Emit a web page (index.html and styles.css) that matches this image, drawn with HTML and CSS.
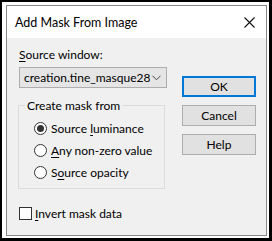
FILE: index.html
```html
<!DOCTYPE html>
<html lang="en">
<head>
  <meta charset="UTF-8">
  <title>Add Mask From Image</title>
  <link rel="stylesheet" href="styles.css">
</head>
<body>

  <div class="frame">
    <div class="window">

      <div class="titlebar">
        <span class="title">Add Mask From Image</span>
        <svg class="close" width="11" height="11" viewBox="0 0 11 11">
          <path d="M0.5 0.5 L10.5 10.5 M10.5 0.5 L0.5 10.5" stroke="#111" stroke-width="1.1" fill="none"/>
        </svg>
      </div>

      <div class="content">
        <div class="left-col">
          <div class="label"><u>S</u>ource window:</div>
          <div class="combo">
            <span class="combo-text">creation.tine_masque28</span>
            <svg class="chevron" width="9" height="6" viewBox="0 0 9 6">
              <path d="M0.5 0.8 L4.5 4.8 L8.5 0.8" stroke="#444" stroke-width="1" fill="none"/>
            </svg>
          </div>

          <fieldset class="group">
            <legend>Create mask from</legend>
            <div class="radio-list">
              <div class="radio-row">
                <span class="radio checked"></span>
                <span>Source <u>l</u>uminance</span>
              </div>
              <div class="radio-row">
                <span class="radio"></span>
                <span><u>A</u>ny non-zero value</span>
              </div>
              <div class="radio-row">
                <span class="radio"></span>
                <span>S<u>o</u>urce opacity</span>
              </div>
            </div>
          </fieldset>

          <div class="check-row">
            <span class="checkbox"></span>
            <span><u>I</u>nvert mask data</span>
          </div>
        </div>

        <div class="right-col">
          <div class="btn default">OK</div>
          <div class="btn">Cancel</div>
          <div class="btn">Help</div>
        </div>
      </div>

    </div>
  </div>

</body>
</html>
```

FILE: styles.css
```css
:root {
  --dialog-bg: #f0f0f0;
  --text-color: #000;
  --button-bg: #e1e1e1;
  --button-border: #adadad;
  --accent-color: #0078d7;
  --group-border: #dcdcdc;
  --font-main: Lato, 'Noto Sans', sans-serif;
}

body {
  margin: 0;
  background: #fff;
  font-family: var(--font-main);
  font-size: 12px;
  color: var(--text-color);
}

u {
  text-decoration-thickness: 1px;
  text-underline-offset: 2px;
}

.frame {
  width: 272px;
  height: 241px;
  box-sizing: border-box;
  border-style: solid;
  border-color: #000;
  border-width: 2px 3px 3px 2px;
  padding: 3px 2px 2px 4px;
  background: #fff;
}

.window {
  height: 231px;
  box-sizing: border-box;
  border: 1px solid #888;
  display: flex;
  flex-direction: column;
}

/* Barre de titre */
.titlebar {
  height: 32px;
  flex-shrink: 0;
  background: #fff;
  display: flex;
  align-items: center;
  justify-content: space-between;
  padding: 0 11px 0 8px;
}

.title {
  font-size: 12.5px;
  line-height: 16px;
  margin-top: 2px;
}

.close {
  display: block;
  margin-top: 1px;
}

.content {
  flex: 1;
  background: var(--dialog-bg);
  display: flex;
  padding: 9px 0 0 12px;
  gap: 15px;
}

.left-col {
  width: 148px;
}

.label {
  line-height: 15px;
  margin-bottom: 5px;
}

.combo {
  height: 21px;
  box-sizing: border-box;
  border: 1px solid var(--button-border);
  background: #e5e5e5;
  display: flex;
  align-items: center;
  padding: 0 5px 0 4px;
  gap: 2px;
}

.combo-text {
  flex: 1;
  white-space: nowrap;
  overflow: hidden;
  line-height: 15px;
}

.chevron {
  display: block;
  flex-shrink: 0;
}

/* Cadre de groupe */
.group {
  margin: 10px 0 0 -1px;
  width: 147px;
  box-sizing: border-box;
  border: 1px solid var(--group-border);
  padding: 4px 0 5px 6px;
}

.group legend {
  padding: 0 2px;
  line-height: 15px;
}

.radio-list {
  margin-left: 9px;
}

.radio-row,
.check-row {
  display: flex;
  align-items: center;
  height: 22px;
  gap: 4px;
}

.radio {
  width: 13px;
  height: 13px;
  box-sizing: border-box;
  border: 1px solid #333;
  border-radius: 50%;
  background: #fff;
  display: flex;
  align-items: center;
  justify-content: center;
}

.radio.checked::after {
  content: "";
  width: 7px;
  height: 7px;
  border-radius: 50%;
  background: #333;
}

.check-row {
  margin-top: 13px;
  gap: 3px;
}

.checkbox {
  width: 13px;
  height: 13px;
  box-sizing: border-box;
  border: 1px solid #333;
  background: #fff;
}

/* Boutons */
.right-col {
  display: flex;
  flex-direction: column;
  gap: 8px;
  padding-top: 29px;
}

.btn {
  width: 74px;
  height: 21px;
  box-sizing: border-box;
  border: 1px solid var(--button-border);
  background: var(--button-bg);
  display: flex;
  align-items: center;
  justify-content: center;
  line-height: 15px;
}

.btn.default {
  border: 2px solid var(--accent-color);
}
```
